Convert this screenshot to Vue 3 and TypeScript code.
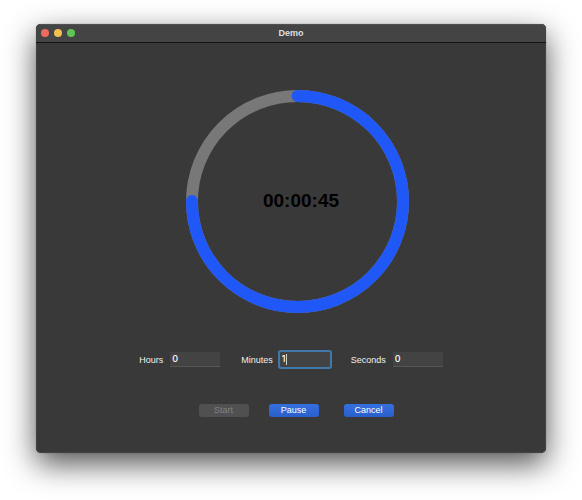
<script setup lang="ts">
import { computed, ref } from 'vue'

interface Field {
  id: string
  label: string
  value: string
  active: boolean
}

const fields = ref<Field[]>([
  { id: 'hours', label: 'Hours', value: '0', active: false },
  { id: 'minutes', label: 'Minutes', value: '1', active: true },
  { id: 'seconds', label: 'Seconds', value: '0', active: false },
])

const total = 60
const remaining = ref(45)
const running = ref(true)

const pad = (n: number): string => String(n).padStart(2, '0')
const clock = computed(() => {
  const s = remaining.value
  return [Math.floor(s / 3600), Math.floor(s / 60) % 60, s % 60].map(pad).join(':')
})

const radius = 106
const circumference = 2 * Math.PI * radius
const dash = computed(() => `${(circumference * remaining.value) / total} ${circumference}`)
</script>

<template>
  <div class="desktop">
    <main class="window">
      <header class="titlebar">
        <div class="lights">
          <span class="light close"></span>
          <span class="light minimize"></span>
          <span class="light zoom"></span>
        </div>
        <h1 class="title">Demo</h1>
      </header>

      <section class="content">
        <div class="dial">
          <svg class="ring" viewBox="0 0 224 224" aria-hidden="true">
            <circle class="track" cx="112" cy="112" :r="radius" />
            <circle
              class="progress"
              cx="112"
              cy="112"
              :r="radius"
              :stroke-dasharray="dash"
              transform="rotate(-90 112 112)"
            />
          </svg>
          <span class="clock">{{ clock }}</span>
        </div>

        <form class="fields" @submit.prevent>
          <div v-for="f in fields" :key="f.id" class="field">
            <label :for="f.id">{{ f.label }}</label>
            <div class="box" :class="{ active: f.active }">
              <input :id="f.id" v-model="f.value" type="text" />
              <span v-if="f.active" class="caret"></span>
            </div>
          </div>
        </form>

        <div class="actions">
          <div class="run">
            <button type="button" class="btn" :disabled="running">Start</button>
            <button type="button" class="btn">Pause</button>
          </div>
          <button type="button" class="btn">Cancel</button>
        </div>
      </section>
    </main>
  </div>
</template>

<style>
body {
  background: #fff;
}
</style>

<style scoped>
.desktop {
  box-sizing: border-box;
  min-height: 100vh;
  padding: 24px 36px 47px;
  display: flex;
  overflow: hidden;
  font-family: "Liberation Sans", Arial, sans-serif;
  font-size: 9px;
  line-height: 12px;
  color: #f0f0f0;
}

.window {
  flex: 1;
  display: flex;
  flex-direction: column;
  background: #393939;
  border-radius: 5px;
  box-shadow:
    inset 0 0 0 1px #444,
    0 0 1px rgba(0, 0, 0, 0.5),
    0 11px 30px rgba(0, 0, 0, 0.68);
}

.titlebar {
  display: grid;
  grid-template-columns: 1fr auto 1fr;
  align-items: center;
  height: 18px;
  padding: 0 5px;
  background: #444;
  border-bottom: 1px solid #111;
  border-radius: 5px 5px 0 0;
  box-shadow: inset 0 1px #505050;
}

.lights {
  display: flex;
  gap: 5px;
}

.light {
  width: 8px;
  height: 8px;
  border-radius: 50%;
}

.close {
  background: #ed6a5e;
}

.minimize {
  background: #f5bf4f;
}

.zoom {
  background: #61c554;
}

.title {
  margin: 0;
  font-size: 9px;
  font-weight: 700;
  color: #dedede;
}

.content {
  flex: 1;
  display: flex;
  flex-direction: column;
  align-items: center;
  padding: 47px 0 35px;
}

.dial {
  display: grid;
  place-items: center;
  padding-left: 13px;
}

.ring,
.clock {
  grid-area: 1 / 1;
}

.ring {
  display: block;
  width: 223px;
  height: 223px;
}

.track,
.progress {
  fill: none;
  stroke-width: 12;
}

.track {
  stroke: #787878;
}

.progress {
  stroke: #2058f8;
  stroke-linecap: round;
}

.clock {
  padding: 0 0 1px 7px;
  font-size: 19px;
  font-weight: 700;
  line-height: 22px;
  color: #000;
}

.fields {
  display: flex;
  gap: 21px;
  margin-top: 39px;
}

.field {
  display: flex;
  align-items: center;
  gap: 7px;
}

.box {
  position: relative;
  display: flex;
  width: 50px;
  background: #434343;
  border-bottom: 1px solid #565656;
  box-sizing: border-box;
}

.box.active {
  border-bottom-color: #434343;
  box-shadow: 0 0 0 2px #3f78a9;
  border-radius: 1px;
}

.box input {
  box-sizing: border-box;
  width: 100%;
  height: 14px;
  margin: 0;
  padding: 0 2px;
  border: 0;
  outline: 0;
  background: transparent;
  font: 500 9px/14px Inter, "Liberation Sans", sans-serif;
  color: #fff;
}

.caret {
  position: absolute;
  left: 6px;
  top: 2px;
  width: 1px;
  height: 11px;
  background: #d0d0d0;
}

.actions {
  display: flex;
  gap: 25px;
  margin-top: 37px;
  padding-left: 10px;
}

.run {
  display: flex;
  gap: 20px;
}

.btn {
  width: 50px;
  height: 13px;
  padding: 0;
  border: 0;
  border-radius: 3px;
  background: linear-gradient(#3570e0, #2a5fcb);
  font: inherit;
  line-height: 13px;
  color: #fff;
}

.btn:disabled {
  background: #505050;
  color: #828282;
}
</style>
